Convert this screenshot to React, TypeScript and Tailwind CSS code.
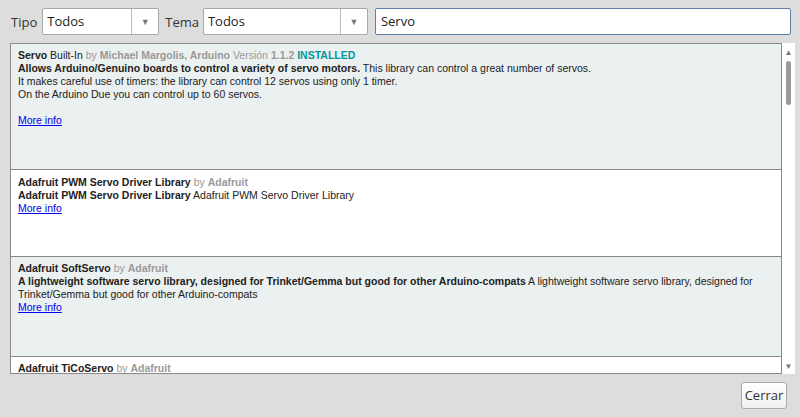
import React from 'react';

const Select: React.FC<{ value: string; w: string }> = ({ value, w }) => (
  <div className={`${w} h-[27px] flex bg-white border border-[#a8a8a8] rounded-[2px]`}>
    <div className="flex-1 flex items-center pl-[4px] text-[13px] text-[#222]">{value}</div>
    <div className="w-[27px] border-l border-[#b8b8b8] flex items-center justify-center text-[9px] text-[#777]">▼</div>
  </div>
);

const MoreInfo = () => <div className="text-[#0000ee] underline">More info</div>;

const By: React.FC<{ who: string }> = ({ who }) => (
  <span className="text-[#999]">
    by <b>{who}</b>
  </span>
);

export default function App() {
  return (
    <div className="w-[800px] h-[417px] bg-[#dddddd] flex flex-col font-['Open_Sans',sans-serif]">
      {/* Toolbar */}
      <div className="h-[43px] flex items-start pt-[8px] pl-[11px] text-[13px] text-[#333]">
        <span className="mt-[5px] mr-[5px]">Tipo</span>
        <Select value="Todos" w="w-[117px]" />
        <span className="mt-[5px] ml-[6px] mr-[4px]">Tema</span>
        <Select value="Todos" w="w-[165px]" />
        <div className="ml-[7px] w-[416px] h-[27px] bg-white border border-[#5d7fa8] rounded-[2px] flex items-center pl-[5px] text-[#222]">
          Servo
        </div>
      </div>

      {/* List */}
      <div className="flex pl-[10px]">
        <div className="w-[772px] h-[331px] border border-[#8a8a8a] bg-white overflow-hidden font-['Liberation_Sans',Arial,sans-serif] text-[10.5px] leading-[13px] text-[#222]">
          <div className="h-[126px] bg-[#ebf0f0] border-b border-[#8a8a8a] pl-[7px] pt-[5px]">
            <div>
              <b>Servo</b> Built-In <span className="text-[#999]">by <b>Michael Margolis, Arduino</b> Versión <b>1.1.2</b></span>{' '}
              <b className="text-[#00979c]">INSTALLED</b>
            </div>
            <div>
              <b>Allows Arduino/Genuino boards to control a variety of servo motors.</b> This library can control a great number of servos.
            </div>
            <div>It makes careful use of timers: the library can control 12 servos using only 1 timer.</div>
            <div>On the Arduino Due you can control up to 60 servos.</div>
            <div className="h-[13px]" />
            <MoreInfo />
          </div>
          <div className="h-[87px] bg-white border-b border-[#8a8a8a] pl-[7px] pt-[6px]">
            <div>
              <b>Adafruit PWM Servo Driver Library</b> <By who="Adafruit" />
            </div>
            <div>
              <b>Adafruit PWM Servo Driver Library</b> Adafruit PWM Servo Driver Library
            </div>
            <MoreInfo />
          </div>
          <div className="h-[100px] bg-[#ebf0f0] border-b border-[#8a8a8a] pl-[7px] pt-[5px]">
            <div>
              <b>Adafruit SoftServo</b> <By who="Adafruit" />
            </div>
            <div className="whitespace-nowrap">
              <b>A lightweight software servo library, designed for Trinket/Gemma but good for other Arduino-compats</b> A lightweight software servo library, designed for
            </div>
            <div>Trinket/Gemma but good for other Arduino-compats</div>
            <MoreInfo />
          </div>
          <div className="bg-white pl-[7px] pt-[5px]">
            <div>
              <b>Adafruit TiCoServo</b> <By who="Adafruit" />
            </div>
          </div>
        </div>
        {/* Scrollbar */}
        <div className="w-[13px] h-[331px] bg-white flex flex-col items-center">
          <div className="mt-[4px] text-[8px] leading-[10px] text-[#777]">▲</div>
          <div className="mt-[4px] w-[5px] h-[44px] rounded-full bg-[#9a9a9a]" />
          <div className="flex-1" />
          <div className="mb-[3px] text-[8px] leading-[10px] text-[#777]">▼</div>
        </div>
      </div>

      {/* Footer */}
      <div className="flex justify-end pr-[13px] pt-[8px]">
        <div className="w-[46px] h-[27px] border border-[#aaaaaa] rounded-[3px] bg-gradient-to-b from-white to-[#f0f0f0] flex items-center justify-center text-[13px] text-[#333]">
          Cerrar
        </div>
      </div>
    </div>
  );
}
